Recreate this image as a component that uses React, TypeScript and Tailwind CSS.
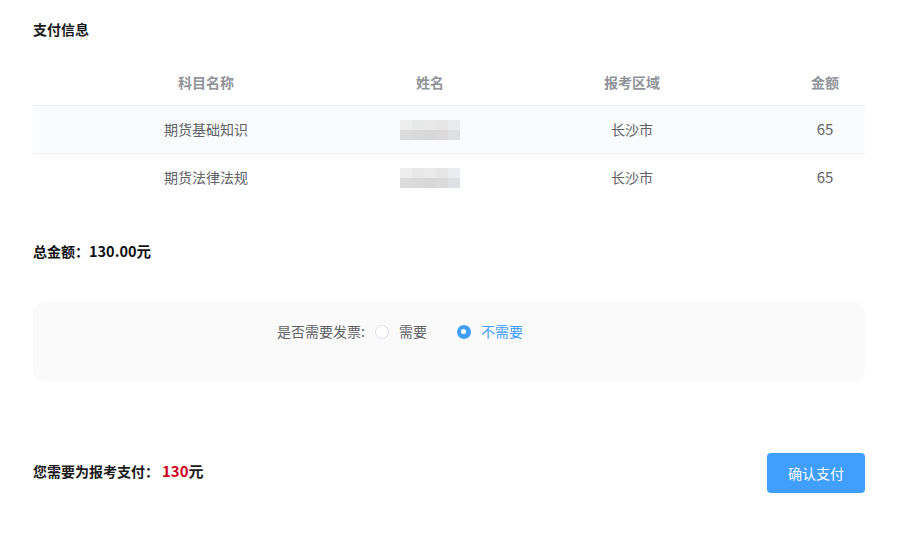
const ROWS = [
  { subject: '期货基础知识', area: '长沙市', amount: '65' },
  { subject: '期货法律法规', area: '长沙市', amount: '65' },
];

const COLS = 'grid grid-cols-[346px_102px_302px_84px] items-center text-center';

function BlurredName() {
  return (
    <div className="mx-auto grid h-[20px] w-[60px] grid-cols-5 grid-rows-2 opacity-90">
      <div className="bg-[#ececec]" />
      <div className="bg-[#e6e6e6]" />
      <div className="bg-[#e8e8e8]" />
      <div className="bg-[#e4e4e4]" />
      <div className="bg-[#e9eaec]" />
      <div className="bg-[#d9d9d9]" />
      <div className="bg-[#d6d6d6]" />
      <div className="bg-[#d4d4d4]" />
      <div className="bg-[#d8d6d6]" />
      <div className="bg-[#dcdfe2]" />
    </div>
  );
}

function Radio({ checked, label }: { checked: boolean; label: string }) {
  return (
    <label className="flex items-center gap-[10px]">
      {checked ? (
        <span className="flex h-[14px] w-[14px] items-center justify-center rounded-full bg-[#409eff]">
          <span className="h-[5px] w-[5px] rounded-full bg-white" />
        </span>
      ) : (
        <span className="h-[14px] w-[14px] rounded-full border border-[#dcdfe6] bg-white" />
      )}
      <span className={checked ? 'text-[#409eff]' : 'text-[#606266]'}>{label}</span>
    </label>
  );
}

export default function App() {
  return (
    <main
      className="min-h-screen bg-white px-[33px] pt-[19px] text-[14px] text-[#303133]"
      style={{ fontFamily: '"Noto Sans CJK SC", "Noto Sans", sans-serif' }}
    >
      <h2 className="text-[14px] font-bold leading-[20px] text-[#1a1a1a]">支付信息</h2>

      <div className="mt-[21px] w-[832px]">
        <div className={`${COLS} h-[46px] border-b border-[#ebeef5] text-[14px] font-bold text-[#909399]`}>
          <div>科目名称</div>
          <div>姓名</div>
          <div>报考区域</div>
          <div>金额</div>
        </div>
        {ROWS.map((r, i) => (
          <div
            key={r.subject}
            className={`${COLS} h-[48px] border-b text-[14px] text-[#606266] ${
              i === 0 ? 'border-[#ebeef5] bg-[#fafbfc]' : 'border-transparent'
            }`}
          >
            <div>{r.subject}</div>
            <div>
              <BlurredName />
            </div>
            <div>{r.area}</div>
            <div className="text-[15px]">{r.amount}</div>
          </div>
        ))}
      </div>

      <div className="mt-[38px] flex items-baseline font-bold text-[#111]">
        <span className="text-[14px]">总金额：</span>
        <span className="text-[14.5px]">130.00元</span>
      </div>

      <div className="mt-[40px] flex h-[80px] w-[832px] items-start rounded-xl bg-[#fafafa] pl-[244px] pt-[19px] text-[14px]">
        <div className="flex items-center">
          <span className="mr-[10px] text-[#606266]">是否需要发票:</span>
          <Radio checked={false} label="需要" />
          <span className="w-[30px]" />
          <Radio checked label="不需要" />
        </div>
      </div>

      <div className="mt-[71px] flex w-[832px] items-start justify-between">
        <div className="mt-[7px] flex items-baseline font-bold text-[#1a1a1a]">
          <span className="text-[14px]">您需要为报考支付：</span>
          <span className="ml-[3px] text-[15px] text-[#d0021b]">130</span>
          <span className="text-[15px]">元</span>
        </div>
        <button className="h-[40px] w-[98px] rounded-[4px] bg-[#409eff] text-[14px] text-white">
          确认支付
        </button>
      </div>
    </main>
  );
}
